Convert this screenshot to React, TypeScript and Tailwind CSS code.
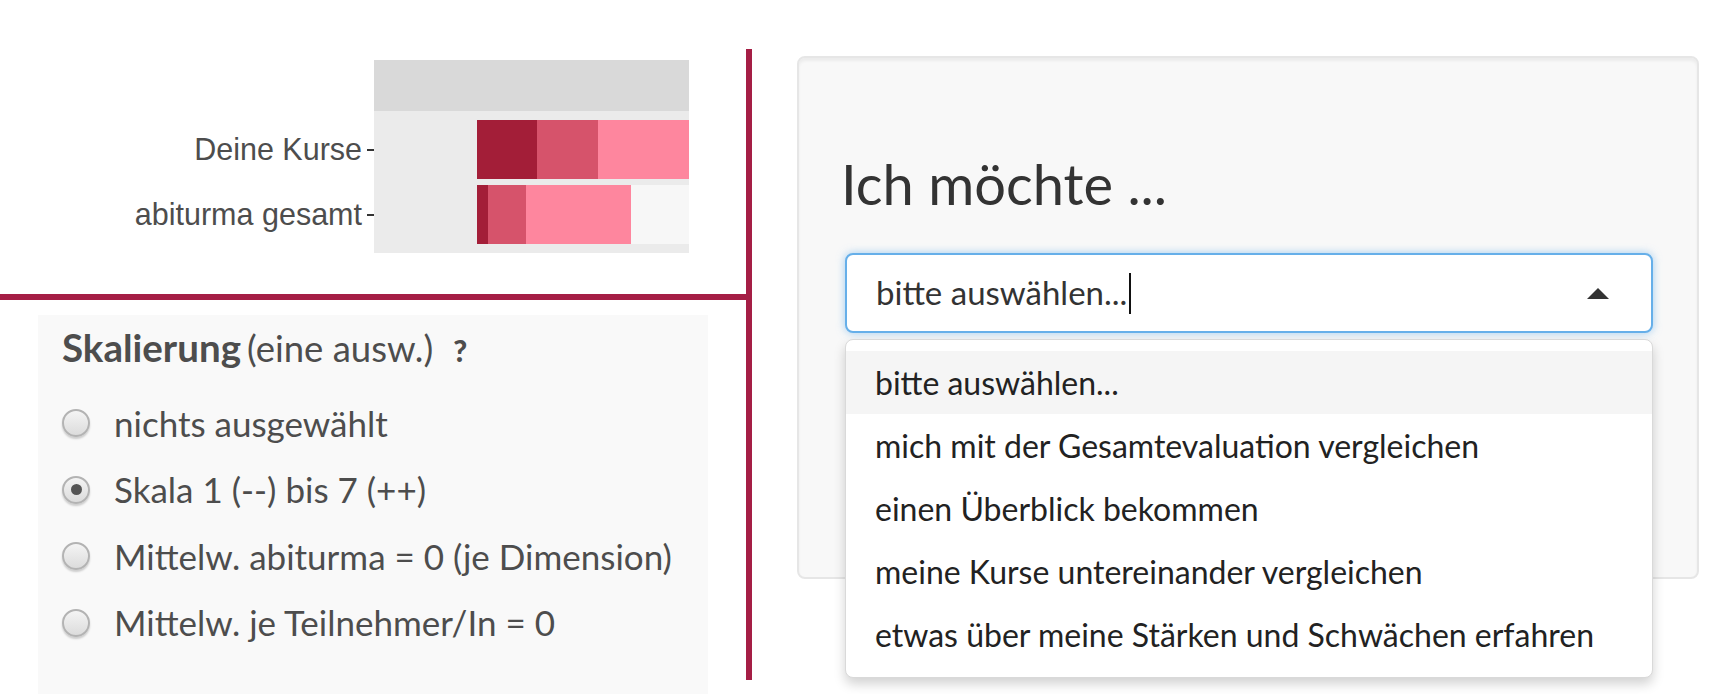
import React from "react";

const lato = { fontFamily: "Lato, 'Noto Sans', sans-serif" };

function Radio({ checked }: { checked?: boolean }) {
  return (
    <span className="flex h-[28px] w-[28px] shrink-0 items-center justify-center rounded-full border-2 border-[#b3b3b3] bg-gradient-to-b from-[#f4f4f4] to-[#dcdcdc] shadow-[0_2px_2px_rgba(0,0,0,0.18)]">
      {checked && <span className="h-[11px] w-[11px] rounded-full bg-[#555]" />}
    </span>
  );
}

const options = [
  "nichts ausgewählt",
  "Skala 1 (--) bis 7 (++)",
  "Mittelw. abiturma = 0 (je Dimension)",
  "Mittelw. je Teilnehmer/In = 0",
];

const choices = [
  "bitte auswählen...",
  "mich mit der Gesamtevaluation vergleichen",
  "einen Überblick bekommen",
  "meine Kurse untereinander vergleichen",
  "etwas über meine Stärken und Schwächen erfahren",
];

export default function App() {
  return (
    <div className="flex h-[694px] w-[1710px] overflow-hidden bg-white">
      {/* left column: chart + scaling box */}
      <div className="flex w-[746px] shrink-0 flex-col">
        <div className="flex h-[294px] pt-[60px]">
          <div
            className="flex w-[374px] flex-col gap-[6px] pt-[60px] text-[30.5px] text-[#4d4d4d]"
            style={{ fontFamily: "'Liberation Sans', Arial, sans-serif" }}
          >
            {["Deine Kurse", "abiturma gesamt"].map((l) => (
              <div key={l} className="flex h-[59px] items-center justify-end">
                <span>{l}</span>
                <span className="ml-[5px] h-[2px] w-[7px] bg-[#333]" />
              </div>
            ))}
          </div>
          <div className="flex h-[193px] w-[315px] flex-col">
            <div className="h-[51px] bg-[#d9d9d9]" />
            <div className="flex flex-1 flex-col gap-[6px] bg-[#ebebeb] py-[9px] pl-[103px]">
              <div className="flex h-[59px]">
                <div className="w-[60px] bg-[#a31e38]" />
                <div className="w-[61px] bg-[#d6536b]" />
                <div className="w-[91px] bg-[#fe869e]" />
              </div>
              <div className="flex h-[59px]">
                <div className="w-[11px] bg-[#a31e38]" />
                <div className="w-[38px] bg-[#d6536b]" />
                <div className="w-[105px] bg-[#fe869e]" />
                <div className="w-[58px] bg-[#f7f7f7]" />
              </div>
            </div>
          </div>
        </div>
        <div className="h-[6px] bg-[#a51e45]" />
        <div className="flex-1 pl-[38px] pt-[15px]">
          <div className="h-full w-[670px] bg-[#f9f9f9] pl-[24px] pt-[4px] text-[#4d4d4d]" style={lato}>
            <div className="flex items-baseline text-[36.5px]">
              <span className="text-[38.5px] font-bold">Skalierung</span>
              <span className="ml-[6px]">(eine ausw.)</span>
              <span className="ml-[20px] text-[30px] font-black">?</span>
            </div>
            <div className="mt-[13px] flex flex-col">
              {options.map((o, i) => (
                <div key={o} className="flex h-[66.5px] items-center gap-[24px] text-[35px]">
                  <Radio checked={i === 1} />
                  <span>{o}</span>
                </div>
              ))}
            </div>
          </div>
        </div>
      </div>

      {/* divider */}
      <div className="mt-[49px] h-[631px] w-[6px] shrink-0 bg-[#a51e45]" />

      {/* right column: select panel */}
      <div className="pl-[45px] pt-[56px]" style={lato}>
        <div className="h-[523px] w-[902px] rounded-[8px] border-2 border-[#e6e6e6] bg-[#f8f8f8] pl-[46px] pr-[44px] pt-[97px] text-[#333] shadow-[inset_0_3px_3px_rgba(0,0,0,0.05)]">
          <h1 className="-ml-[4px] h-[57px] text-[56px] leading-[57px] font-normal">Ich möchte ...</h1>
          <div className="relative mt-[41px]">
            <div className="flex h-[80px] items-center rounded-[8px] border-2 border-[#66afe9] bg-white pl-[29px] pr-[42px] text-[33px] shadow-[0_0_8px_rgba(102,175,233,0.6)]">
              <span>bitte auswählen...</span>
              <span className="ml-[2px] h-[41px] w-[2px] bg-[#111]" />
              <svg className="ml-auto" width="22" height="11" viewBox="0 0 22 11">
                <polygon points="0,11 11,0 22,11" fill="#333" />
              </svg>
            </div>
            <div className="absolute left-0 right-0 top-[86px] h-[339px] rounded-[8px] border border-[#d9d9d9] bg-white py-[11px] shadow-[0_6px_12px_rgba(0,0,0,0.18)]">
              {choices.map((c, i) => (
                <div
                  key={c}
                  className={
                    i === 0
                      ? "flex h-[63px] items-center bg-[#f5f5f5] pl-[29px] text-[32px] text-[#222]"
                      : "flex h-[63px] items-center pl-[29px] text-[32px] text-[#222]"
                  }
                >
                  {c}
                </div>
              ))}
            </div>
          </div>
        </div>
      </div>
    </div>
  );
}
